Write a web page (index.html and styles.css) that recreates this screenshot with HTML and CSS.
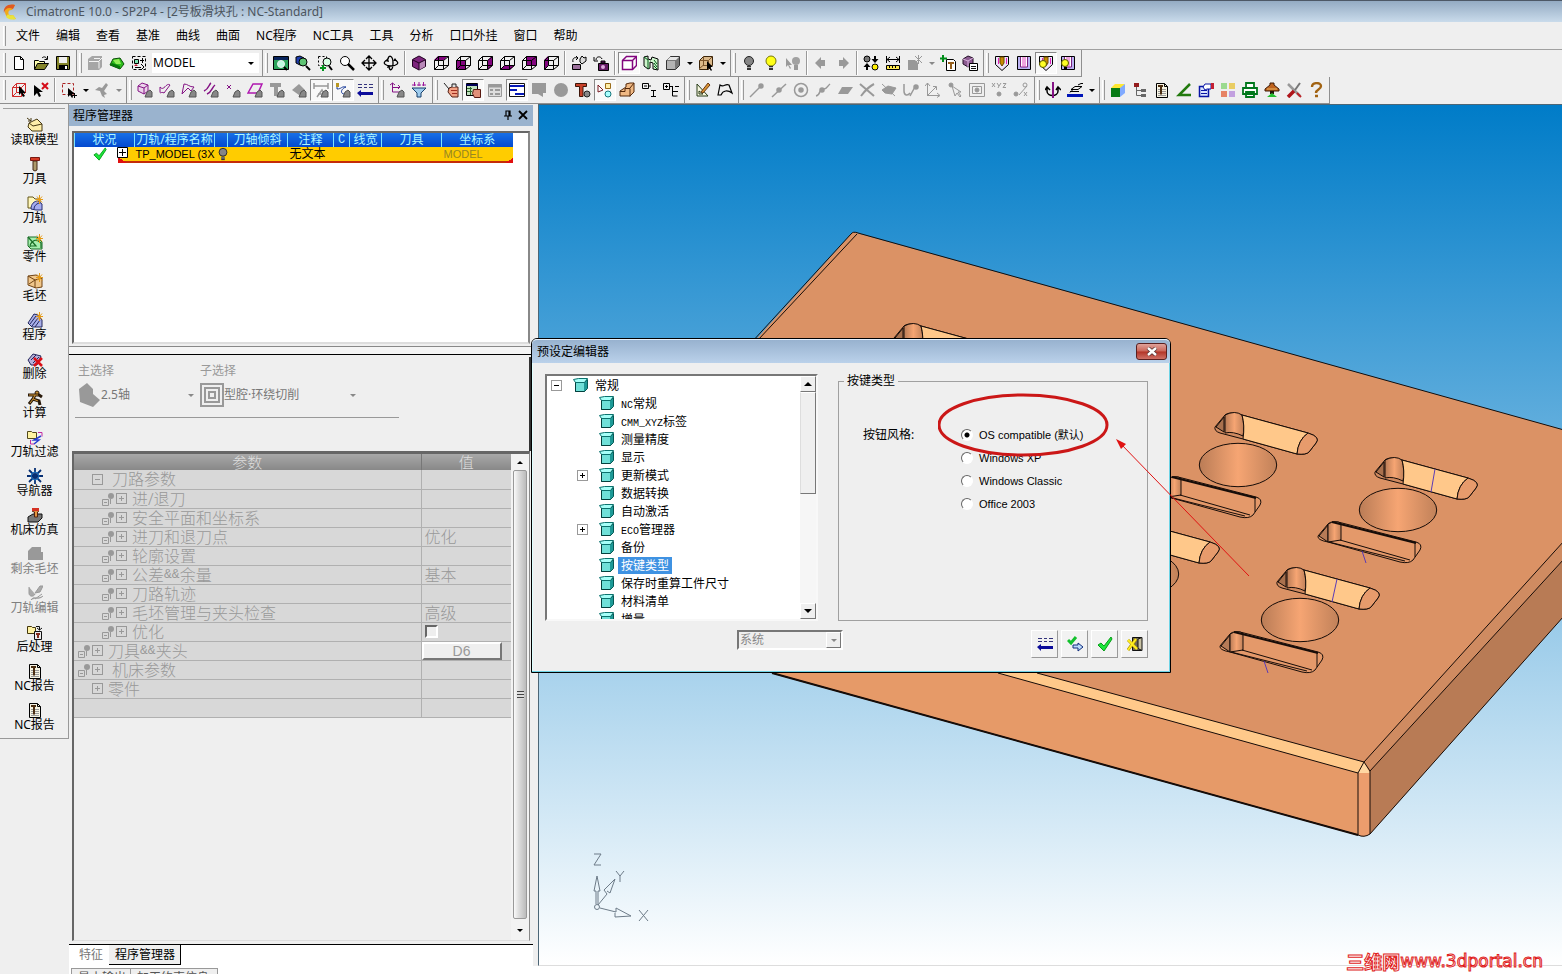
FILE: index.html
```html
<!DOCTYPE html>
<html lang="zh-CN">
<head>
<meta charset="utf-8">
<title>CimatronE 10.0</title>
<link rel="stylesheet" href="styles.css">
</head>
<body>
<svg class="defs" aria-hidden="true">
<defs>
<g id="new"><path d="M3.500 1.500h6l3 3v10h-9z" fill="#fff" stroke="#000"/><path d="M9.500 1.500v3h3" fill="none" stroke="#000"/></g>
<g id="open"><path d="M1.500 14V5.500h4l1 1h5v3" fill="#ffffb0" stroke="#000"/><path d="M1.500 14.500l3-6h11l-4 6z" fill="#84842a" stroke="#000"/><path d="M9 3c2-2 4-1 5 1M14.500 1v3.500h-3" fill="none" stroke="#000"/></g>
<g id="save"><path d="M1.500 1.500h13v13h-13z" fill="#84842a" stroke="#000"/><path d="M4 2h8v6H4z" fill="#eee"/><path d="M4 10h9v5H4z" fill="#000"/><path d="M10 11h2v3h-2z" fill="#fff"/></g>
<g id="greybox"><path d="M1 4l4-3h10v11l-3 3H1z" fill="#a6a6a6"/><path d="M2 6.500h10v7M12 6l3-3M7 3.500h6" fill="none" stroke="#f4f4f4"/></g>
<g id="green"><path d="M1 10L4 4l7-1 4 6-4 5z" fill="#2fbd1d" stroke="#0a4d08"/><path d="M4 5l6-1 2 5-5 0z" fill="#94ee59"/><path d="M1 10l10 4v-3l-8-3z" fill="#08780b"/></g>
<g id="frames"><path d="M1.500 1.500h13v13h-13z" fill="none" stroke="#000" stroke-dasharray="3 2"/><path d="M3.500 4.500h4v4h-4z" fill="#7de4b1" stroke="#000"/><path d="M9 5.500h4M11.500 3v5M4 12.500h6M10 9l3 3-3 3" fill="none" stroke="#000"/><path d="M3 11l2-2 2 2z" fill="#c51830"/></g>
<g id="zoomall"><path d="M.5 1.500h15v13H.5z" fill="#2ba45a" stroke="#000"/><path d="M1 2h14v3H1z" fill="#08245c"/><circle cx="8" cy="9" r="3.500" fill="#bdfde0" stroke="#eee"/><path d="M11 12l3 3" stroke="#000" stroke-width="2"/></g>
<g id="zoomsel"><path d="M1 2l4-1 4 2v5l-4 2-4-2z" fill="#1d3cad" stroke="#000"/><circle cx="8" cy="7" r="4" fill="#5fc474" stroke="#000"/><path d="M11 11l4 4" stroke="#000" stroke-width="2"/></g>
<g id="zoomwin"><path d="M1.500 1.500h8v9h-8z" fill="none" stroke="#000" stroke-dasharray="2 2"/><circle cx="10" cy="7" r="4" fill="#d7ffe5" stroke="#000"/><path d="M12 11l3 4" stroke="#000" stroke-width="2"/><path d="M3 13h6M6 10v6" stroke="#00931d" stroke-width="2"/></g>
<g id="zoom"><circle cx="6" cy="6" r="4.500" fill="#fff" stroke="#000"/><path d="M9 9l6 6" stroke="#000" stroke-width="2.500"/></g>
<g id="pan"><path d="M8 1v14M1 8h14M5 4l3-3 3 3M5 12l3 3 3-3M4 5L1 8l3 3M12 5l3 3-3 3" fill="none" stroke="#000" stroke-width="1.300"/></g>
<g id="rot"><path d="M4 5C-2 8 3 11 8 11s10-3 4-6M5 4c1-5 5-3 5 4s-3 9-4 4" fill="none" stroke="#000" stroke-width="1.300"/><path d="M5 3l1 4-4-1zM14 6l-4 0 2-3zM4 13l1-3 3 2z"/></g>
<g id="cube"><path d="M8 1l6.500 3.500v7L8 15l-6.500-3.500v-7z" fill="#7d257d" stroke="#200020"/><path d="M8 8l6-3v6.500L8 15z" fill="#b888b8"/><path d="M2 5l6 3 6-3M8 8v7" fill="none" stroke="#200020"/></g>
<path id="wire" d="M1.500 5.500h9v9h-9zM5.500 1.500h10v9h-10zM1.500 5.500l4-4M10.500 5.500l5-4M10.500 14.500l5-4M1.500 14.500l4-4" fill="none" stroke="#000"/>
<g id="w1"><path d="M1 5l4-4h10l-4 4z" fill="#82057e"/><use href="#wire"/></g>
<g id="w2"><path d="M1 5h10v10H1z" fill="#82057e"/><use href="#wire"/></g>
<g id="w3"><path d="M11 5l4-4v10l-4 4z" fill="#82057e"/><use href="#wire"/></g>
<g id="w4"><path d="M1 15l4-4h10l-4 4z" fill="#82057e"/><use href="#wire"/></g>
<g id="w5"><path d="M5 1h10v10H5z" fill="#82057e"/><use href="#wire"/></g>
<g id="w6"><path d="M1 5l4-4v10l-4 4z" fill="#82057e"/><use href="#wire"/></g>
<g id="viewrot"><path d="M1.500 9.500h8v5h-8z" fill="#9c709c" stroke="#000"/><path d="M2 7C1 3 4 2 6 3M5 1l2 2-2 2" fill="none" stroke="#000"/><path d="M9 4l2-3 2 2 2-1v4l-4 3-2-2z" fill="#ddd" stroke="#000"/></g>
<g id="camera"><path d="M5.500 8.500h10v7h-10zM8 6h4v2H8z" fill="#641a64" stroke="#000"/><circle cx="10" cy="12" r="2" fill="#dca9dc"/><path d="M9 4C8 1 3 1 3 5M1 2v4h4" fill="none" stroke="#000"/></g>
<g id="shade"><path d="M1.500 5.500l4-4h10v9l-4 4h-10z" fill="#fff" stroke="#82057e" stroke-width="1.500"/><path d="M1.500 5.500h10v9M11.500 5.500l4-4" fill="none" stroke="#82057e" stroke-width="1.500"/></g>
<g id="section"><path d="M1 2l4-1v3l3 1 1-3 6 2v11l-5-1V8L7 7v6l-2 1-4-3z" fill="#cef5cc" stroke="#000"/><path d="M1 2l4 3v9M11 5l3 4M11 8l3 4M11 11l3 3" fill="none" stroke="#005b15"/></g>
<g id="solid"><path d="M1.500 5.500l4-4h9v9l-4 4h-9z" fill="#777" stroke="#333"/><path d="M2 5l3-3h9l-3 3z" fill="#e6e6e6"/><path d="M2 6h8v8H2z" fill="#b4b4b4"/></g>
<g id="pickbox"><path d="M1.500 5.500l4-4h9v9l-4 4h-9z" fill="#dab889" stroke="#3a250c"/><path d="M1 5.500h9.500v9M10.500 5.500l4-4M5.500 1v9L1 14M5 10.500h10" fill="none" stroke="#795329"/><path d="M9 6v9l2-2 2 3 1-1-2-3h3z" fill="#000"/></g>
<g id="bulbg"><circle cx="8" cy="6" r="4.500" fill="#858585" stroke="#222"/><path d="M6 11h4v4H6z" fill="#333"/><path d="M6 12.500h4" stroke="#aaa"/></g>
<g id="bulby"><circle cx="8" cy="6" r="5" fill="#ffff18" stroke="#77770a"/><path d="M6 11h4v4H6z" fill="#333"/><path d="M6 12.500h4" stroke="#bbb"/></g>
<g id="bulbp"><circle cx="11" cy="6" r="4" fill="#a1a1a1"/><path d="M9 10h4v5H9zM1 3v9l2-2 2 4 1-1-2-3h3z" fill="#999"/></g>
<path id="left" d="M2 8l6-6v3h4v6H8v3z" fill="#999"/>
<path id="right" d="M14 8L8 2v3H4v6h4v3z" fill="#999"/>
<g id="swap"><circle cx="4" cy="4" r="3" fill="#777" stroke="#000"/><circle cx="12" cy="12" r="3" fill="#fff000" stroke="#000"/><path d="M12 1v5M4 15v-5" stroke="#000" stroke-width="2"/><path d="M8.500 4h7L12 8zM.5 12h7L4 8z"/></g>
<g id="dist"><path d="M1.500 1v7M14.500 1v7M2 4.500h12M5 2L2 4.500 5 7M11 2l3 2.500L11 7" fill="none" stroke="#000"/><path d="M1.500 10.500h13v4h-13z" fill="#ffea52" stroke="#000"/><path d="M4.500 11v2M7.500 11v2M10.500 11v2" stroke="#000"/></g>
<g id="greystar"><path d="M1 5h7l3 3v7H1z" fill="#999"/><path d="M8 1l7 7M15 1L8 8M11.500 0v9" stroke="#999"/></g>
<g id="toolplus"><path d="M6.500 4.500h7l2 2v9h-9z" fill="#fff" stroke="#000"/><path d="M8 7h6v2h-2v5h-2V9H8z" fill="#96601e"/><path d="M3 0v7M0 3.500h7" stroke="#008d19" stroke-width="2"/></g>
<g id="cubelist"><path d="M1 4l5-3 5 2v6l-5 3-5-3z" fill="#8c5c91" stroke="#241027"/><path d="M1 4l5 2 5-3M6 6v6" stroke="#dab1df" fill="none"/><path d="M7.500 8.500h8v7h-8z" fill="#fff" stroke="#000"/><path d="M9 11.500h5M9 13.500h5" stroke="#111"/></g>
<g id="pencil"><path d="M1.500 1.500h13v8l-6.500 6-6.500-6z" fill="#eee4fa" stroke="#000"/><path d="M6 2h4v6l-2 3-2-3z" fill="#c88b00" stroke="#6b4a00"/><path d="M4.500 3v6M12.500 3v6" stroke="#e021c0"/></g>
<g id="slots"><path d="M1.500 1.500h13v13h-13z" fill="#bbb2f2" stroke="#000"/><path d="M4.500 2v10h7V2" fill="#fff" stroke="#7b2180"/><path d="M7 2v10M9 2v10" stroke="#e04ac0"/></g>
<g id="pencilb"><use href="#pencil"/><circle cx="5" cy="9" r="3.500" fill="#ffff25" stroke="#555500"/></g>
<g id="slotsb"><use href="#slots"/><circle cx="5" cy="8" r="3.500" fill="#ffff25" stroke="#555500"/><path d="M4 12h3v3H4z"/></g>
<g id="redcube"><path d="M1.500 5.500h9v9h-9zM5.500 1.500h9v9h-9zM1.500 5.500l4-4M10.500 5.500l4-4M10.500 14.500l4-4M1.500 14.500l4-4" fill="none" stroke="#d02a2a"/><path d="M8 4v9l2-2 2 4 2-1-2-3h3z"/></g>
<g id="ptrx"><path d="M1 3v11l3-3 2 4 2-1-2-4h4z"/><path d="M9 1l6 6M15 1L9 7" stroke="#d40b17" stroke-width="2"/></g>
<g id="selbox"><path d="M1.500 1.500h11v11h-11z" fill="none" stroke="#a22" stroke-dasharray="3 2"/><path d="M7 6v9l2-2 2 3 1-1-1-3h3z"/><path d="M11 13.500h5M13.500 11v5" stroke="#000"/></g>
<path id="greybird" d="M1 8l4-3 3 1 4-5 2 2-4 6 3 3-3 1 1 3-3-2-2-5z" fill="#999"/>
<path id="mono" d="M8 15l2-5 3-2 2 2v5z" fill="#888" stroke="#555"/>
<g id="f1"><path d="M1 4l4-3 6 2v6l-4 3-6-3zM1 4l6 2v6M7 6l4-3" fill="#ead4ea" stroke="#851385"/><use href="#mono"/></g>
<g id="f2"><path d="M1 5C5 10 7 0 11 3L5 11C2 9 1 13 1 9z" fill="none" stroke="#851385"/><use href="#mono"/></g>
<g id="f3"><path d="M1 12L3 2c4 0 5 3 10 3L10 9 7 6z" fill="none" stroke="#851385"/><use href="#mono"/></g>
<g id="f4"><path d="M1 9C6 7 6 2 8 1M4 12C9 10 9 5 12 3" fill="none" stroke="#851385" stroke-width="1.500"/><use href="#mono"/></g>
<g id="f5"><path d="M2 3l4 4M6 3L2 7" stroke="#851385"/><use href="#mono"/></g>
<g id="f6"><path d="M1 11l5-9h9l-4 9z" fill="none" stroke="#b018b0" stroke-width="1.500"/><use href="#mono"/></g>
<g id="f7"><path d="M1 1h11v4H9v9H5V5H1z" fill="#999"/><use href="#mono"/></g>
<g id="f8"><path d="M1 8l7-6 6 6-6 5z" fill="#999"/><use href="#mono"/></g>
<g id="f9"><path d="M1 1v6M15 1v6M1 4h14M4 15l5-7 4 7M5 12h7" fill="none" stroke="#999" stroke-width="1.500"/><use href="#mono"/></g>
<g id="f10"><path d="M2 1v6c5 0 4-3 9-2-6 2-6 8 0 7" fill="none" stroke="#173a99"/><path d="M1 1h3v4H1z" fill="#b89622"/><use href="#mono"/></g>
<g id="list"><path d="M1 2.500h4M7 2.500h3M12 2.500h4M1 5.500h4M7 5.500h3M12 5.500h4" stroke="#33337c"/><path d="M0 11l4-3v2h12v3H4v2z" fill="#0b0b9a"/></g>
<g id="tree"><path d="M3.500 1v9h9M3 5.500h7M1 3l2.500-2L6 3M9 3l2 2-2 2" fill="none" stroke="#851385"/><use href="#mono"/></g>
<g id="funnel"><path d="M1 6h14l-5 5v4H6v-4z" fill="#9eccef" stroke="#163f6b"/><path d="M3.500 0v4M8 0v4M12.500 0v4M1 3h4M6 3h4M11 3h4" stroke="#9b169b"/></g>
<g id="hand1"><path d="M6 6l3-1h6v10H9L5 10z" fill="#f2a184" stroke="#552015"/><path d="M9 5V2h4v3M1 1l5 6" fill="#ddd" stroke="#222"/><path d="M8 8.500h6M9 11.500h5" stroke="#a12d21"/></g>
<g id="hand2"><path d="M1.500 1.500h11v12h-11z" fill="#bfe0bd" stroke="#000"/><path d="M1 3h12" stroke="#005" stroke-width="2"/><path d="M2 6.500h5M2 9.500h5M5.500 5v8" stroke="#2b672c"/><path d="M8.500 7.500h7v8h-6l-2-4z" fill="#e09079" stroke="#581910"/></g>
<g id="form"><path d="M1.500 2.500h13v12h-13z" fill="#ddd" stroke="#999"/><path d="M1 4h14" stroke="#999" stroke-width="3"/><path d="M3 8h3M3 12h3M8 8h5M8 12h5" stroke="#999" stroke-width="2"/></g>
<g id="rows"><path d="M.5 1.500h15v13H.5z" fill="#fff" stroke="#111"/><path d="M1 4h14M1 8h7M6 12h9" stroke="#0618b8" stroke-width="2"/></g>
<path id="bubble" d="M1 1h14v10h-3v4l-5-3H1z" fill="#999"/>
<circle id="disc" cx="8" cy="8" r="7" fill="#999"/>
<g id="hammer"><path d="M.5 1.500h11v3H8v10H4.500v-10h-4z" fill="#c74129" stroke="#3d1509"/><circle cx="12" cy="12" r="3" fill="#888" stroke="#222"/></g>
<g id="shapes"><path d="M1 3v7l5-2z" fill="#fff" stroke="#791c24"/><path d="M8.500 1.500h5v5h-5z" fill="#ffefaa" stroke="#9b6d1b"/><circle cx="11" cy="12" r="3" fill="#aff" stroke="#17777d"/></g>
<g id="step"><path d="M1 9l6-4V2l4-1h4v9l-4 4H1z" fill="#f0b984" stroke="#54290b"/><path d="M1 9.500h5v-3h5v8M11 6l4-5" fill="none" stroke="#54290b"/></g>
<g id="nodea"><path d="M1.500 1.500h6v5h-6zM3 4h3M8 4h2M10 8.500h5M12.500 8v6M10 14.500h5" fill="none" stroke="#000"/></g>
<g id="nodeb"><path d="M.5 1.500h6v6h-6zM2 4.500h3M3.500 3v3M7 4.500h3M9.500 4v10h5M10 9.500h5M12 4.500h4" fill="none" stroke="#000"/></g>
<g id="sketch"><path d="M2 2v12h11zM4 9v3h4z" fill="#f8f8e0" stroke="#263b17"/><path d="M6 10l7-9 2 2-7 8z" fill="#d79335" stroke="#6c3912"/></g>
<path id="surf" d="M1 13L3 3c4 3 5-2 9 0l3 8c-4-3-9-3-11 2z" fill="none" stroke="#000" stroke-width="1.200"/>
<g id="g1" fill="none" stroke="#999" stroke-width="1.500"><path d="M1 15L13 3"/><circle cx="12" cy="4" r="2" fill="#999"/></g>
<g id="g2" fill="none" stroke="#999" stroke-width="1.500"><path d="M1 15L15 2"/><circle cx="8" cy="8" r="2" fill="#999"/></g>
<g id="g3" fill="none" stroke="#999" stroke-width="1.500"><circle cx="8" cy="8" r="6.500"/><circle cx="8" cy="8" r="2" fill="#999"/></g>
<g id="g4" fill="none" stroke="#999" stroke-width="1.500"><path d="M1 14c5-1 3-8 7-7s4-3 7-5"/><circle cx="7" cy="8" r="2" fill="#999"/></g>
<path id="g5" d="M1 12l4-7h11l-5 7z" fill="#999"/>
<path id="g6" d="M1 2l14 12M15 2C9 5 5 10 2 14" stroke="#999" stroke-width="2" fill="none"/>
<g id="g7" fill="#999" stroke="#999"><path d="M1 8l6-4 8 2-4 6-7-1z"/><path d="M1 2l13 12"/></g>
<g id="g8" fill="none" stroke="#999" stroke-width="1.500"><path d="M1 2v7c0 5 4 5 6 2M13 3L7 14"/><circle cx="13" cy="5" r="2" fill="#999"/></g>
<path id="g9" d="M2.500 1v12.500h12M2 14l9-9M8 4.500h3.500V8M0 4l2.500-3L5 4M12 11l3 2.500-3 2" stroke="#999" fill="none"/>
<g id="g10" fill="none" stroke="#999"><circle cx="4" cy="3" r="2" fill="#999"/><path d="M5 4l3 10 2-3 3 4 1-1-3-4h3z"/></g>
<g id="g11" fill="none" stroke="#999"><path d="M.5 1.500h15v13H.5zM3.500 4.500h9v7h-9z"/><circle cx="8" cy="8" r="2" fill="#999"/></g>
<g id="g12" fill="none" stroke="#999"><path d="M1 1l3 4M4 1L1 5M6 1l2 3 2-3M8 4L7 6M12 1.500h3l-3 4h3"/><circle cx="8" cy="12" r="2" fill="#999"/></g>
<g id="g13" fill="none" stroke="#999"><path d="M6 13l8-9M11 10l3 4M14 10l-3 4"/><circle cx="3" cy="12" r="2" fill="#999"/><circle cx="12" cy="3" r="2"/></g>
<g id="ucs"><path d="M2 6v3c0 6 11 6 11 0V6M0 8l2-3 3 3M11 8l2-3 3 3" fill="none" stroke="#000" stroke-width="1.500"/><path d="M8 0v16" stroke="#851385" stroke-width="2"/></g>
<g id="planes"><path d="M4 7.500l4-3h7l-4 3zM3 10.500l3-3M11 3l3-1.500h2" fill="none" stroke="#000"/><path d="M3 9.500h9" stroke="#000"/><path d="M0 12h16v3H0z" fill="#0014b8"/></g>
<g id="cubergb"><path d="M1 6h9v9H1z" fill="#077b16"/><path d="M1 6l4-4h10l-4 4z" fill="#ffe831"/><path d="M10 6l5-4v9l-5 4z" fill="#80aaff"/></g>
<g id="redtree"><path d="M2 1h5v4H2z" fill="#941c1d"/><path d="M4.500 5v8.500h5M4 8.500h5" fill="none" stroke="#666"/><path d="M9 7h5v3H9zM9 12h5v3H9z" fill="#666"/></g>
<g id="doc"><path d="M2.500 1.500h8l3 3v11h-11z" fill="#f6f3e2" stroke="#000"/><path d="M10.500 1.500v3h3" fill="none" stroke="#000"/><path d="M4 7.500h8M4 9.500h8M4 11.500h8M4 13.500h8" stroke="#999"/><path d="M4 3h5v2H8v7l-1 1-1-1V5H4z" fill="#4a2c10"/></g>
<path id="angle" d="M14 2L3 13h12" stroke="#227a0e" stroke-width="2.500" fill="none"/>
<g id="prop"><path d="M1.500 4.500h9v10h-9z" fill="#d8e2fe" stroke="#0713a5" stroke-width="1.500"/><path d="M3 8.500h6M3 11.500h6" stroke="#0713a5"/><path d="M5 5l2-3h6v5h-4l-2 1z" fill="#fff" stroke="#0713a5"/><path d="M13 1h3v6h-3z" fill="#c42033"/></g>
<g id="tiles"><path d="M1 1h6v6H1z" fill="#9bda8f"/><path d="M9 1h6v6H9z" fill="#e9cd63"/><path d="M1 9h6v6H1z" fill="#e68365"/><path d="M9 9h6v6H9z" fill="#c2a0df"/></g>
<g id="print"><path d="M4 1h8v5H4zM1 6h14v6H1zM4 10h8v5H4z" fill="#fff" stroke="#00781b" stroke-width="1.800"/></g>
<g id="lamp"><path d="M6 1h4v2l5 4v2H1V7l5-4z" fill="#be621d" stroke="#3f1c08"/><path d="M3 7h10" stroke="#eab663"/><path d="M6 9h4v3H6z" fill="#241309"/><path d="M8 11l5 4H3z" fill="#25be31"/></g>
<g id="tools"><path d="M2 2l12 12" stroke="#999" stroke-width="2.500"/><path d="M14 1L9 8" stroke="#777" stroke-width="2"/><path d="M8 9l-6 6" stroke="#af151b" stroke-width="3.500"/><path d="M11 11l4 4" stroke="#bc2227" stroke-width="2"/></g>
<path id="help" d="M4 5c0-5 9-5 9-1 0 4-5 3-5 7M7 14h3" stroke="#a26312" stroke-width="2.400" fill="none"/>
<g id="star"><path d="M12.500 0v9M9 4.500h7M10 1.500l5 6M15 1.500l-5 6" stroke="#e69b15"/></g>
<g id="s1"><path d="M2 6l8-4 5 5v7H5l-4-4z" fill="#ffefaa" stroke="#463813"/><path d="M2 6l4 3 9-2M0 1l4 3M4 1v3H1" fill="none" stroke="#463813"/></g>
<g id="s2"><path d="M6 5h4v9l-2 1-2-1z" fill="#ad9a6b" stroke="#442916"/><path d="M3.500 1.500h9v3h-9z" fill="#d53b26" stroke="#7a1a12"/></g>
<g id="s3"><path d="M1 2h5l2 2h5v9H1z" fill="#fff7ba" stroke="#645719"/><path d="M4 14c0-5 3-8 7-8l4 3v6H9z" fill="#a5acef" stroke="#262e74"/><path d="M7 14c0-3 2-5 5-6" fill="none" stroke="#262e74"/><use href="#star"/></g>
<g id="s4"><path d="M1 3h9l5 5v7H4l-3-3z" fill="#a5efad" stroke="#196d26"/><path d="M3 13c0-4 3-7 7-7l4 3v5M1 3l8 9h-6" fill="none" stroke="#196d26" stroke-width="1.200"/><use href="#star"/></g>
<g id="s5"><path d="M1 3l8-1 6 3v9l-6 1-8-3z" fill="#f1c78b" stroke="#704313"/><path d="M1 3l7 4 7-2M8 7v8M2 11l6-4" fill="none" stroke="#704313"/><use href="#star"/></g>
<g id="s6"><path d="M1 11l6-9 4 1 4 5v7H5z" fill="#a9afea" stroke="#23275c"/><path d="M3 12l6-8M5 14l6-8M8 15l5-7" stroke="#23275c"/><use href="#star"/></g>
<g id="s7"><path d="M1 9l5-6 8 2-4 9H4z" fill="#b7b0da" stroke="#23275c"/><path d="M4 9l5-5M6 12l6-6" stroke="#23275c"/><path d="M7 7l8 8M15 7l-8 8" stroke="#d90f18" stroke-width="2.500"/></g>
<g id="s8"><circle cx="10" cy="3" r="2" fill="#cd9233" stroke="#28190a"/><path d="M1 5h11l3 2M8 5L6 9l6 2 1 4M6 9l-4 5" fill="none" stroke="#28190a" stroke-width="3"/><path d="M2 5h9M8 5L6 9l5 2M6 9l-3 4" fill="none" stroke="#d29735"/></g>
<g id="s9"><path d="M.5 2.500h4l1 1h4v6h-9z" fill="#fff4a2" stroke="#534a1b"/><path d="M11 3.500h4v4M3.500 11v4h4" fill="none" stroke="#c22ba2"/><path d="M14 7L7 11h5l-5 4" fill="none" stroke="#263dd2" stroke-width="1.500"/></g>
<g id="s10"><path d="M8 0v16M0 8h16M2 2l12 12M14 2L2 14" stroke="#072f73" stroke-width="1.800"/><circle cx="8" cy="8" r="4" fill="none" stroke="#2179c7"/></g>
<g id="s11"><path d="M1 10l5-3h9v4l-4 4H1z" fill="#777" stroke="#111"/><path d="M5.500 1.500h6v3l-1 .5v5h-3V5l-2-.5z" fill="#e29540" stroke="#522211"/><path d="M5 1h7v3H5z" fill="#d53223"/></g>
<path id="s12" d="M1 5l4-4h9v5h2v8H1z" fill="#999"/>
<path id="s13" d="M2 2v6c0 4 5 4 6 1M4 15c3-5 7 1 12-4M8 8l5-7h3l-3 6zM8 14l7-5" fill="#aaa" stroke="#999"/>
<g id="s14"><path d="M.5 2.500h4l1 1h3v6h-8z" fill="#fff2a3" stroke="#44380b"/><path d="M7.500 7.500h7v8h-7z" fill="#eee" stroke="#111"/><path d="M9 2.500h3.500V6M10 4l2.500 2L15 4" fill="none" stroke="#111"/><path d="M9 9h4v2h-1v3h-2v-3H9z" fill="#852e1f"/></g>
<g id="folder"><path d="M2.500 5.500h9l3-3v9l-3 3h-9z" fill="#1d9a97" stroke="#075955"/><path d="M3 6h8v8H3z" fill="#6fe0d8"/><path d="M2.500 5.500L.5 2.500l5-1h9l-3 4z" fill="#a6fff8" stroke="#0b716d"/><path d="M2.500 5.500v9h9" fill="none" stroke="#04403d"/></g>
<g id="pin"><circle cx="10" cy="4" r="3" fill="#999"/><path d="M9.500 7v5M1.500 7.500h6v6h-6zM3 10.500h3" fill="none" stroke="#999"/></g>
<g id="tick"><path d="M1 9l3-2 3 3 7-9 1 2-8 12z" fill="#1be63b" stroke="#079c17"/></g>
<g id="tickgo"><path d="M1 4l3 3 5-6" fill="none" stroke="#13c12d" stroke-width="3"/><path d="M6 9v3h5v3l5-4-5-4v2z" fill="#bcdafa" stroke="#102c7c"/></g>
<g id="exit"><path d="M5.500 1.500h9v13h-9z" fill="#6e6958" stroke="#111"/><path d="M11 3l4-1.500v13l-4-2z" fill="#c9c2a4" stroke="#111"/><path d="M1 4l9 9M9 3l-8 11" stroke="#b59700" stroke-width="3"/><path d="M1 4l9 9M9 3l-8 11" stroke="#ffef20" stroke-width="1.800"/></g>

<linearGradient id="bore"><stop offset="0" stop-color="#ba7c56"/><stop offset=".5" stop-color="#f6a573"/><stop offset="1" stop-color="#c18159"/></linearGradient>
<g id="slotA" stroke="#160c08" stroke-width="1">
<path d="M0 0L10-12Q14-16 27-12L93 6Q106 10 101 16L94 25Q91 28 82 27L28 12 5 6Q-1 4 0 0z" fill="#d08a60"/>
<path d="M1 0L9-10V5z" fill="#a9714e"/>
<path d="M10-12Q20-17 27-12 30 0 28 9 18 4 10 6z" fill="url(#bore)"/>
<path d="M27-12L93 6Q83 13 82 27L28 12Q30-2 27-12z" fill="#ffc88a"/>
<path d="M93 6Q106 10 101 16L94 25Q91 28 82 27 83 13 93 6z" fill="#e79b6c"/>
</g>
<g id="slotB" stroke="#160c08" stroke-width="1">
<path d="M0 0L10-12Q14-16 24-13L98 6Q105 8 102 14L95 24Q91 28 82 26L10 6Q-1 4 0 0z" fill="#e4996a"/>
<path d="M1 0L10-11V6z" fill="#b77b57"/><path d="M10-12Q17-16 23-13V4L10 6z" fill="url(#bore)"/>
<path d="M14-14L98 7" fill="none" stroke-width="2"/><path d="M22 4L92 24M11 6l76 19M97 7v14" fill="none"/>
</g>
<g id="holes"><use href="#slotA"/><ellipse cx="23" cy="38" rx="38.700" ry="21.700" fill="url(#bore)" stroke="#160c08"/><use href="#slotB" x="-57" y="64"/></g>
</defs>
</svg>

<header class="titlebar">
<svg width="16" height="16" viewBox="0 0 16 16"><path d="M13 1C0-2-1 17 14 15l-3-4c-6 2-6-6-1-5z" fill="#f0a91c"/><path d="M13 1C5-1 1 4 2 9 3 4 7 3 11 5z" fill="#e05a21"/><path d="M4 13c3 3 7 3 10 2l-3-4c-3 1-4 0-5-1z" fill="#e8e33c"/></svg>
<h1>CimatronE 10.0 - SP2P4 - [2号板滑块孔 : NC-Standard]</h1>
</header>
<nav class="menu"><i class="grip"></i><button>文件</button><button>编辑</button><button>查看</button><button>基准</button><button>曲线</button><button>曲面</button><button>NC程序</button><button>NC工具</button><button>工具</button><button>分析</button><button>口口外挂</button><button>窗口</button><button>帮助</button></nav>

<div class="bar">
<div class="grp first"><i class="grip"></i><button aria-label="新建"><svg><use href="#new"/></svg></button><button aria-label="打开"><svg><use href="#open"/></svg></button><button aria-label="保存"><svg><use href="#save"/></svg></button></div>
<div class="grp"><i class="grip"></i><button aria-label="零件"><svg><use href="#greybox"/></svg></button><button aria-label="毛坯"><svg><use href="#green"/></svg></button><button aria-label="坐标"><svg><use href="#frames"/></svg></button><span class="combo"><select aria-label="坐标系"><option>MODEL</option></select><i class="tri"></i></span></div>
<div class="grp"><i class="grip"></i><button aria-label="全部显示"><svg><use href="#zoomall"/></svg></button><button aria-label="显示所选"><svg><use href="#zoomsel"/></svg></button><button aria-label="窗口放大"><svg><use href="#zoomwin"/></svg></button><button aria-label="缩放"><svg><use href="#zoom"/></svg></button><button aria-label="平移"><svg><use href="#pan"/></svg></button><button aria-label="旋转"><svg><use href="#rot"/></svg></button><i class="sep"></i><button aria-label="等轴测"><svg><use href="#cube"/></svg></button><button aria-label="俯视"><svg><use href="#w1"/></svg></button><button aria-label="前视"><svg><use href="#w2"/></svg></button><button aria-label="右视"><svg><use href="#w3"/></svg></button><button aria-label="仰视"><svg><use href="#w4"/></svg></button><button aria-label="后视"><svg><use href="#w5"/></svg></button><button aria-label="左视"><svg><use href="#w6"/></svg></button><i class="sep"></i><button aria-label="翻转视图"><svg><use href="#viewrot"/></svg></button><button aria-label="视图快照"><svg><use href="#camera"/></svg></button><i class="sep"></i><button class="on" aria-label="线框"><svg><use href="#shade"/></svg></button><button aria-label="剖面"><svg><use href="#section"/></svg></button><button aria-label="着色"><svg><use href="#solid"/></svg></button><i class="dd"></i><button aria-label="拾取实体"><svg><use href="#pickbox"/></svg></button><i class="dd"></i></div>
<div class="grp"><i class="grip"></i><button aria-label="隐藏"><svg><use href="#bulbg"/></svg></button><button aria-label="显示"><svg><use href="#bulby"/></svg></button><button aria-label="选择显示"><svg><use href="#bulbp"/></svg></button><i class="sep"></i><button aria-label="后退"><svg><use href="#left"/></svg></button><button aria-label="前进"><svg><use href="#right"/></svg></button><i class="sep"></i><button aria-label="切换显示"><svg><use href="#swap"/></svg></button><button aria-label="测量"><svg><use href="#dist"/></svg></button><button aria-label="爆炸"><svg><use href="#greystar"/></svg></button><i class="dd dim"></i><button aria-label="添加刀具"><svg><use href="#toolplus"/></svg></button><button aria-label="实体列表"><svg><use href="#cubelist"/></svg></button></div>
<div class="grp"><i class="grip"></i><button aria-label="刀具视图"><svg><use href="#pencil"/></svg></button><button aria-label="路径视图"><svg><use href="#slots"/></svg></button><button class="on" aria-label="显示刀具"><svg><use href="#pencilb"/></svg></button><button aria-label="显示路径"><svg><use href="#slotsb"/></svg></button></div>
</div>
<div class="bar">
<div class="grp first"><i class="grip"></i><button aria-label="选择实体"><svg><use href="#redcube"/></svg></button><button aria-label="取消选择"><svg><use href="#ptrx"/></svg></button><i class="sep"></i><button aria-label="框选"><svg><use href="#selbox"/></svg></button><i class="dd"></i><button aria-label="过滤"><svg><use href="#greybird"/></svg></button><i class="dd dim"></i></div>
<div class="grp"><i class="grip"></i><button aria-label="过滤体"><svg><use href="#f1"/></svg></button><button aria-label="过滤面"><svg><use href="#f2"/></svg></button><button aria-label="过滤边"><svg><use href="#f3"/></svg></button><button aria-label="过滤曲线"><svg><use href="#f4"/></svg></button><button aria-label="过滤点"><svg><use href="#f5"/></svg></button><button aria-label="过滤平面"><svg><use href="#f6"/></svg></button><button aria-label="过滤刀具"><svg><use href="#f7"/></svg></button><button aria-label="过滤毛坯"><svg><use href="#f8"/></svg></button><button class="on" aria-label="过滤尺寸"><svg><use href="#f9"/></svg></button><button class="on" aria-label="过滤轨迹"><svg><use href="#f10"/></svg></button><button aria-label="重置过滤"><svg><use href="#list"/></svg></button></div>
<div class="grp"><i class="grip"></i><button aria-label="过滤坐标"><svg><use href="#tree"/></svg></button><button aria-label="漏斗"><svg><use href="#funnel"/></svg></button></div>
<div class="grp"><i class="grip"></i><button aria-label="向导"><svg><use href="#hand1"/></svg></button><button class="on" aria-label="表格"><svg><use href="#hand2"/></svg></button><button aria-label="表单"><svg><use href="#form"/></svg></button><button class="on" aria-label="行视图"><svg><use href="#rows"/></svg></button><button aria-label="注释"><svg><use href="#bubble"/></svg></button><button aria-label="圆盘"><svg><use href="#disc"/></svg></button><button aria-label="刀具库"><svg><use href="#hammer"/></svg></button><button class="on" aria-label="几何"><svg><use href="#shapes"/></svg></button><button aria-label="台阶"><svg><use href="#step"/></svg></button><button aria-label="折叠"><svg><use href="#nodea"/></svg></button><button aria-label="展开"><svg><use href="#nodeb"/></svg></button></div>
<div class="grp"><i class="grip"></i><button aria-label="草图"><svg><use href="#sketch"/></svg></button><button aria-label="曲面"><svg><use href="#surf"/></svg></button></div>
<div class="grp"><i class="grip"></i><button aria-label="端点"><svg><use href="#g1"/></svg></button><button aria-label="中点"><svg><use href="#g2"/></svg></button><button aria-label="圆心"><svg><use href="#g3"/></svg></button><button aria-label="曲线点"><svg><use href="#g4"/></svg></button><button aria-label="面点"><svg><use href="#g5"/></svg></button><button aria-label="交点"><svg><use href="#g6"/></svg></button><button aria-label="穿透点"><svg><use href="#g7"/></svg></button><button aria-label="投影点"><svg><use href="#g8"/></svg></button><button aria-label="原点"><svg><use href="#g9"/></svg></button><button aria-label="拾取点"><svg><use href="#g10"/></svg></button><button aria-label="屏幕点"><svg><use href="#g11"/></svg></button><button aria-label="坐标点"><svg><use href="#g12"/></svg></button><button aria-label="增量点"><svg><use href="#g13"/></svg></button></div>
<div class="grp"><i class="grip"></i><button aria-label="坐标系"><svg><use href="#ucs"/></svg></button><button aria-label="工作面"><svg><use href="#planes"/></svg></button><i class="dd"></i></div>
<div class="grp"><i class="grip"></i><button aria-label="颜色"><svg><use href="#cubergb"/></svg></button><button aria-label="结构树"><svg><use href="#redtree"/></svg></button><button aria-label="报告"><svg><use href="#doc"/></svg></button><button aria-label="角度"><svg><use href="#angle"/></svg></button><button aria-label="属性"><svg><use href="#prop"/></svg></button><button aria-label="平铺"><svg><use href="#tiles"/></svg></button><button aria-label="打印"><svg><use href="#print"/></svg></button><button aria-label="光源"><svg><use href="#lamp"/></svg></button><button aria-label="预设定"><svg><use href="#tools"/></svg></button><button aria-label="帮助"><svg><use href="#help"/></svg></button></div>
</div>

<main class="desk">
<aside class="side">
<button><svg><use href="#s1"/></svg>读取模型</button>
<button><svg><use href="#s2"/></svg>刀具</button>
<button><svg><use href="#s3"/></svg>刀轨</button>
<button><svg><use href="#s4"/></svg>零件</button>
<button><svg><use href="#s5"/></svg>毛坯</button>
<button><svg><use href="#s6"/></svg>程序</button>
<button><svg><use href="#s7"/></svg>删除</button>
<button><svg><use href="#s8"/></svg>计算</button>
<button><svg><use href="#s9"/></svg>刀轨过滤</button>
<button><svg><use href="#s10"/></svg>导航器</button>
<button><svg><use href="#s11"/></svg>机床仿真</button>
<button disabled><svg><use href="#s12"/></svg>剩余毛坯</button>
<button disabled><svg><use href="#s13"/></svg>刀轨编辑</button>
<button><svg><use href="#s14"/></svg>后处理</button>
<button><svg><use href="#doc"/></svg>NC报告</button>
<button><svg><use href="#doc"/></svg>NC报告</button>
</aside>

<section class="panel">
<div class="ptitle"><h2>程序管理器</h2><button aria-label="固定"><svg width="10" height="10" viewBox="0 0 10 10"><path d="M3 6V1h4v5M1 6h8M5 6v4M6 1v5" fill="none" stroke="#000" stroke-width="1.200"/></svg></button><button aria-label="关闭"><svg width="10" height="10" viewBox="0 0 10 10"><path d="M1 1l8 8M9 1L1 9" stroke="#000" stroke-width="1.800"/></svg></button></div>
<div class="list">
<table class="prog">
<colgroup><col class="c60"><col class="c80"><col class="c13"><col class="c60"><col class="c46"><col class="c16"><col class="c32"><col class="c60"><col class="c71"></colgroup>
<thead><tr><th>状况</th><th>刀轨/程序名称</th><th></th><th>刀轴倾斜</th><th>注释</th><th class="cc">C</th><th>线宽</th><th>刀具</th><th>坐标系</th></tr></thead>
<tbody><tr><td class="st"><svg class="ok" width="14" height="14" viewBox="0 0 16 16"><use href="#tick"/></svg><svg class="ex" width="11" height="11" viewBox="0 0 11 11"><path d="M.5.5h10v10H.5z" fill="#fff" stroke="#000"/><path d="M2 5.500h7M5.500 2v7" stroke="#000"/></svg></td><td class="name">TP_MODEL (3X</td><td><svg class="blb" width="14" height="14" viewBox="0 0 16 16"><use href="#bulbg"/></svg></td><td></td><td class="cjk">无文本</td><td></td><td></td><td></td><td class="mdl">MODEL</td></tr></tbody>
</table>
</div>
<div class="split"></div>
<div class="pick">
<div class="pf"><span>主选择</span><button disabled><svg width="23" height="24" viewBox="0 0 23 24"><path d="M1 6L9 0l6 6v5l7 6-7 7L2 19z" fill="#999"/></svg>2.5轴<i class="tri dim"></i></button></div>
<div class="pf wide"><span>子选择</span><button disabled><svg width="24" height="24" viewBox="0 0 24 24"><path d="M1 1h22v22H1zM5 5h14v14H5zM9 9h6v6H9z" fill="none" stroke="#999" stroke-width="2"/></svg>型腔·环绕切削<i class="tri dim"></i></button></div>
</div>
<div class="params">
<div class="ptable">
<table class="tab">
<thead><tr><th>参数</th><th class="val">值</th></tr></thead>
<tbody>
<tr><td><div class="r l0 wide"><i class="bx mi"></i>刀路参数</div></td><td></td></tr>
<tr><td><div class="r l1"><svg><use href="#pin"/></svg><i class="bx"></i>进/退刀</div></td><td></td></tr>
<tr><td><div class="r l1"><svg><use href="#pin"/></svg><i class="bx"></i>安全平面和坐标系</div></td><td></td></tr>
<tr><td><div class="r l1"><svg><use href="#pin"/></svg><i class="bx"></i>进刀和退刀点</div></td><td>优化</td></tr>
<tr><td><div class="r l1"><svg><use href="#pin"/></svg><i class="bx"></i>轮廓设置</div></td><td></td></tr>
<tr><td><div class="r l1"><svg><use href="#pin"/></svg><i class="bx"></i>公差<small>&amp;&amp;</small>余量</div></td><td>基本</td></tr>
<tr><td><div class="r l1"><svg><use href="#pin"/></svg><i class="bx"></i>刀路轨迹</div></td><td></td></tr>
<tr><td><div class="r l1"><svg><use href="#pin"/></svg><i class="bx"></i>毛坯管理与夹头检查</div></td><td>高级</td></tr>
<tr><td><div class="r l1"><svg><use href="#pin"/></svg><i class="bx"></i>优化</div></td><td><input type="checkbox" aria-label="优化"></td></tr>
<tr><td><div class="r"><svg><use href="#pin"/></svg><i class="bx"></i>刀具<small>&amp;&amp;</small>夹头</div></td><td class="nb"><button class="d6" disabled>D6</button></td></tr>
<tr><td><div class="r wide"><svg><use href="#pin"/></svg><i class="bx"></i>机床参数</div></td><td></td></tr>
<tr><td><div class="r l0"><i class="bx"></i>零件</div></td><td></td></tr>
<tr><td></td><td></td></tr>
</tbody>
</table>
</div>
<div class="vs"><i class="tri up"></i><div class="thumb"><i></i></div><i class="tri"></i></div>
</div>
<div class="tabs"><button class="off">特征</button><button class="act">程序管理器</button></div>
<div class="foot"><span>最小输出</span><span class="f2">加工约束信息</span></div>
</section>

<section class="view">
<svg class="scene" viewBox="539 105 1023 861" preserveAspectRatio="xMinYMin slice">
<path d="M853 232L1564 430V616L1370 834Q1364 838 1358 835L530 604V590z" fill="#db9265"/>
<path d="M772 673L530 606V540L1358 773V835z" fill="#e69a68"/>
<path d="M998 673L860 634 900 634 1037 673 1364 762 1358 773z" fill="#ffc98a"/>
<path d="M1370 771L1564 559V616L1370 834z" fill="#b87b55"/>
<path d="M1364 762L1564 541V559L1370 771z" fill="#cf8b61"/>
<path d="M1358 773h12v61q-6 4-12 1z" fill="#ec9d6d"/>
<path d="M1364 762l-6 11h12z" fill="#ffd7a2"/>
<g fill="none" stroke="#160c08" stroke-width="1"><path d="M740 355L851 234Q853 231 858 233L1564 430M744 355L857 234M772 673L1358 835Q1364 838 1370 834L1564 616M998 673L1358 773M1037 673L1364 762 1564 541M1370 771L1564 559M1364 762L1358 773V835M1364 762L1370 771V834"/><path d="M772 673L1358 835" stroke-width="2"/></g>
<use href="#slotA" x="894" y="338"/>
<use href="#holes" x="1215" y="427"/><use href="#holes" x="1375" y="472"/><use href="#holes" x="1277" y="582"/><use href="#holes" x="1117" y="536"/>
<path d="M1435 469l-4 23M1362 551l4 12M1337 579l-5 23M1264 661l4 12" stroke="#5b3bb5"/>
<g fill="none" stroke="#6d7b88"><path d="M596 904v-13h-2l3-15 3 15h-2v13M598 905l9-11-3-4 11-11-5 14-3-2M600 908l16 4v-4l15 8-16 1v-4"/><circle cx="597" cy="907" r="2.500"/><path d="M594 854h7l-7 11h7M616 871l4 5 4-5M620 876v6M639 910l9 11M648 910l-9 11"/></g>
</svg>
<p class="mark">三维网<span>www.3dportal.cn</span></p>
</section>

<section class="dlg">
<div class="dt"><h2>预设定编辑器</h2><button aria-label="关闭"><svg width="12" height="9" viewBox="0 0 12 9"><path d="M2 1l8 7M10 1L2 8" stroke="#553131" stroke-width="4"/><path d="M2 1l8 7M10 1L2 8" stroke="#fff" stroke-width="2.400"/></svg></button></div>
<div class="db">
<div class="treebox">
<ul>
<li class="root"><i class="bx mi"></i><svg><use href="#folder"/></svg><span>常规</span></li>
<li><svg><use href="#folder"/></svg><span><small>NC</small>常规</span></li>
<li><svg><use href="#folder"/></svg><span><small>CMM_XYZ</small>标签</span></li>
<li><svg><use href="#folder"/></svg><span>测量精度</span></li>
<li><svg><use href="#folder"/></svg><span>显示</span></li>
<li class="par"><i class="bx"></i><svg><use href="#folder"/></svg><span>更新模式</span></li>
<li><svg><use href="#folder"/></svg><span>数据转换</span></li>
<li><svg><use href="#folder"/></svg><span>自动激活</span></li>
<li class="par"><i class="bx"></i><svg><use href="#folder"/></svg><span><small>ECO</small>管理器</span></li>
<li><svg><use href="#folder"/></svg><span>备份</span></li>
<li><svg><use href="#folder"/></svg><span class="sel">按键类型</span></li>
<li><svg><use href="#folder"/></svg><span>保存时重算工件尺寸</span></li>
<li><svg><use href="#folder"/></svg><span>材料清单</span></li>
<li><svg><use href="#folder"/></svg><span>增量</span></li>
</ul>
<div class="ts"><b><i class="tri up"></i></b><div class="tt"></div><b class="dn"><i class="tri"></i></b></div>
</div>
<fieldset>
<legend>按键类型</legend>
<div class="opts"><span class="lab">按钮风格:</span>
<div class="rads">
<label><input type="radio" name="style" checked>OS compatible (默认)</label>
<label><input type="radio" name="style">Windows XP</label>
<label><input type="radio" name="style">Windows Classic</label>
<label><input type="radio" name="style">Office 2003</label>
</div></div>
</fieldset>
</div>
<div class="df">
<span class="combo sys"><select disabled aria-label="级别"><option>系统</option></select><b><i class="tri dim"></i></b></span>
<div class="acts"><button aria-label="重置"><svg><use href="#list"/></svg></button><button aria-label="应用"><svg><use href="#tickgo"/></svg></button><button aria-label="确定"><svg><use href="#tick"/></svg></button><button aria-label="退出"><svg><use href="#exit"/></svg></button></div>
</div>
</section>
<svg class="note" viewBox="938 390 320 200" aria-hidden="true"><ellipse cx="1023" cy="425" rx="84" ry="30" fill="none" stroke="#cb1717" stroke-width="3"/><path d="M1249 576L1120 443" stroke="#e01212" fill="none"/><path d="M1116 439l10 5-5 5z" fill="#e01212"/></svg>
</main>
</body>
</html>
```
FILE: styles.css
```css
* { box-sizing: border-box; }
body {
  margin: 0;
  height: 100vh;
  overflow: hidden;
  display: flex;
  flex-direction: column;
  background: #efefef;
  color: #000;
  font: 12px/16px "Noto Sans", "Noto Sans CJK SC", sans-serif;
}
button, select, input { font: inherit; color: inherit; margin: 0; }
button { border: 0; background: none; padding: 0; }
h1, h2, p, ul { margin: 0; padding: 0; font: inherit; }
i { display: block; }
.defs { position: absolute; width: 0; height: 0; }

.titlebar {
  height: 22px;
  flex: none;
  display: flex;
  align-items: center;
  gap: 8px;
  padding-left: 2px;
  border-top: 1px solid #4d5866;
  background: linear-gradient(#94abc3, #c9dbeb);
  color: #4c555e;
}
.menu {
  height: 28px;
  flex: none;
  display: flex;
  align-items: center;
  gap: 16px;
  padding-left: 3px;
  border-bottom: 1px solid #a0a0a0;
}
.menu .grip { margin-right: -6px; }
.grip {
  width: 3px;
  height: 20px;
  flex: none;
  border-right: 1px solid #999;
  border-left: 1px solid #fff;
}
.bar {
  height: 27px;
  flex: none;
  display: flex;
}
.grp {
  display: flex;
  align-items: center;
  padding: 0 2px;
  border-right: 1px solid #8f8f8f;
  border-bottom: 1px solid #8f8f8f;
}
.grp.first { padding-left: 3px; }
.grp .grip { margin-right: 2px; }
.grp button {
  width: 22px;
  height: 22px;
  display: grid;
  place-items: center;
}
.grp svg, .side svg, .dlg li svg, .acts svg {
  width: 16px;
  height: 16px;
  flex: none;
}
.grp button.on {
  background: #f9f9f9;
  border: 1px solid;
  border-color: #888 #fff #fff #888;
}
.sep {
  width: 2px;
  height: 24px;
  margin: 0 2px;
  border-left: 1px solid #999;
  border-right: 1px solid #fff;
}
.tri, .dd::before {
  content: "";
  display: block;
  width: 0;
  height: 0;
  border: 3px solid transparent;
  border-top: 3px solid #000;
  border-bottom: 0;
}
.dd { width: 11px; display: grid; place-items: center; }
.tri.dim, .dd.dim::before { border-top-color: #888; }
.tri.up { border-top: 0; border-bottom: 3px solid #000; }
.combo {
  display: grid;
  align-items: center;
  width: 107px;
  margin: 0 1px 0 2px;
}
.combo > * { grid-area: 1 / 1; }
.combo > .tri { justify-self: end; margin-right: 5px; pointer-events: none; }
.combo select {
  appearance: none;
  width: 100%;
  height: 20px;
  padding: 0 1px;
  border: 0;
  background: #fff;
  line-height: 18px;
}

.desk { position: relative; flex: 1; min-height: 0; display: flex; background: #fff; }
.side {
  width: 69px;
  flex: none;
  display: flex;
  flex-direction: column;
  background: linear-gradient(#a0a0a0, #a0a0a0) 3px 4px / 62px 1px no-repeat, linear-gradient(#999, #999) 68px 0 / 1px 635px no-repeat, linear-gradient(#999, #999) 0 634px / 69px 1px no-repeat, #efefef;
  padding-top: 13px;
}
.side button {
  height: 39px;
  display: flex;
  flex-direction: column;
  align-items: center;
  line-height: 14px;
}
.side button:disabled { color: #808080; }

.panel {
  width: 464px;
  flex: none;
  display: flex;
  flex-direction: column;
  background: #efefef;
}
.ptitle {
  height: 21px;
  flex: none;
  margin-top: 1px;
  padding: 0 5px 0 4px;
  display: flex;
  align-items: center;
  gap: 5px;
  background: #9ab3ce;
}
.ptitle h2 { flex: 1; }
.ptitle button { width: 10px; height: 10px; display: grid; margin-bottom: 1px; }
.list {
  height: 213px;
  flex: none;
  margin: 5px 3px 1px 3px;
  background: #fff;
  border: 2px solid;
  border-color: #666 #888 #ddd #666;
}
table { border-collapse: collapse; table-layout: fixed; }
.prog { width: 438px; }
.c60 { width: 60px; } .c80 { width: 80px; } .c13 { width: 13px; } .c46 { width: 46px; }
.c16 { width: 16px; } .c32 { width: 32px; } .c71 { width: 71px; }
.prog th {
  height: 14px;
  padding: 0;
  border-left: 1px solid #7ce4ff;
  background: linear-gradient(#176fe6, #0349cf);
  color: #aef6ff;
  font-weight: 400;
  line-height: 14px;
  white-space: nowrap;
}
.prog th.cc { font-family: "Liberation Mono", monospace; }
.prog td {
  height: 16px;
  padding: 0 0 0 2px;
  line-height: 14px;
  vertical-align: top;
  white-space: nowrap;
  font-family: "Liberation Sans", "Noto Sans CJK SC", sans-serif;
  background: linear-gradient(#fc0 14px, #c52c08 14px);
}
.prog .st {
  display: flex;
  justify-content: space-between;
  padding: 0 7px 0 18px;
  background: linear-gradient(to top right, #e01010 50%, transparent 50%) 43px 10px / 9px 6px no-repeat, linear-gradient(90deg, #fff 43px, transparent 43px), linear-gradient(#fc0 14px, #c52c08 14px);
}
.prog .name, .prog .mdl { font-size: 11px; }
.prog .name { padding-left: 1px; }
.prog .mdl {
  color: #968722;
  background: linear-gradient(to bottom right, transparent 50%, #e01010 50%) right bottom / 8px 5px no-repeat, linear-gradient(#fc0 14px, #c52c08 14px);
}
.prog .blb { display: block; margin-left: -1px; }
.split {
  height: 9px;
  flex: none;
  margin-top: 1px;
  border-top: 1px solid #888;
  border-bottom: 1px solid #000;
  background: #f4f4f4;
}
.pick {
  height: 94px;
  flex: none;
  margin: 2px 2px 0 4px;
  padding: 6px 0 0 5px;
  display: flex;
  border-right: 2px solid #333;
  background: linear-gradient(#999, #999) 2px 60px / 324px 1px no-repeat;
  color: #999;
}
.pf { width: 122px; }
.pf.wide { width: 162px; }
.pf button {
  width: 100%;
  height: 28px;
  margin-top: 2px;
  padding-right: 6px;
  display: flex;
  align-items: center;
  color: #777;
}
.pf .tri { margin-left: auto; }

.params {
  flex: 1;
  min-height: 0;
  display: flex;
  margin: 0 3px 0 3px;
  border-left: 2px solid #666;
  border-right: 1px solid #888;
  border-top: 3px solid #666;
  border-bottom: 1px solid #ddd;
}
.ptable { flex: 1; }
.tab {
  width: 100%;
  border-bottom: 1px solid #777;
  color: #999;
  font-size: 16px;
  font-weight: 300;
}
.tab th {
  height: 16px;
  padding: 0;
  background: linear-gradient(#a8a8a8, #888);
  color: #ddd;
  font-size: 15px;
  font-weight: 300;
  line-height: 14px;
}
.tab th.val { width: 90px; border-left: 1px solid #777; }
.tab td {
  height: 19px;
  padding: 0 0 0 3px;
  background: #d8d8d8;
  border-bottom: 1px solid #b0b0b0;
  line-height: 16px;
}
.tab td + td { border-left: 1px solid #b0b0b0; }
.tab td.nb { padding: 0; }
.tab small { font: 13px/16px "Liberation Mono", monospace; }
.r { display: flex; align-items: center; height: 18px; line-height: 16px; }
.r > svg { width: 13px; height: 14px; margin-right: 2px; }
.r .bx { margin-right: 5px; }
.l0 { padding-left: 15px; }
.l1 { padding-left: 24px; }
.r.wide .bx { margin-right: 9px; }
.bx {
  width: 11px;
  height: 11px;
  flex: none;
  border: 1px solid #999;
  background: linear-gradient(currentColor, currentColor) center / 5px 1px no-repeat, linear-gradient(currentColor, currentColor) center / 1px 5px no-repeat;
}
.bx.mi { background: linear-gradient(currentColor, currentColor) center / 5px 1px no-repeat; }
.tab input {
  appearance: none;
  display: block;
  width: 13px;
  height: 13px;
  border: 2px solid;
  border-color: #666 #fff #fff #666;
  background: #eee;
}
.d6 {
  display: block;
  width: 80px;
  height: 18px;
  background: #efefef;
  border: 2px solid;
  border-color: #fff #777 #777 #fff;
  color: #999;
  font: 14px/14px "Liberation Sans", sans-serif;
}
.vs {
  width: 18px;
  flex: none;
  display: flex;
  flex-direction: column;
  align-items: center;
  justify-content: space-between;
  padding: 7px 0 8px;
  background: #f3f3f3;
}
.thumb {
  flex: 1;
  width: 14px;
  margin: 6px 0 10px;
  display: grid;
  place-items: center;
  border: 1px solid #999;
  border-radius: 2px;
  background: linear-gradient(90deg, #fafafa, #ddd 40%, #bbb);
}
.thumb i { width: 7px; height: 8px; background: repeating-linear-gradient(#444 0 1px, #ddd 1px 3px); }
.tabs {
  height: 24px;
  flex: none;
  display: flex;
  align-items: flex-start;
  margin-top: 3px;
  border-top: 1px solid #000;
  background: #fff;
}
.tabs button { height: 20px; }
.off { padding: 0 6px 0 10px; color: #777; }
.tabs .act {
  padding: 0 5px 0 6px;
  background: #efefef;
  border: solid #000;
  border-width: 0 1px 1px 0;
}
.foot { height: 6px; flex: none; display: flex; padding-left: 2px; overflow: hidden; background: #fff; }
.foot span {
  height: 20px;
  padding: 1px 6px;
  width: 60px;
  line-height: 16px;
  white-space: nowrap;
  color: #555;
  background: #efefef;
  border: 1px solid #999;
}
.foot .f2 { width: 87px; border-left: 0; }

.view {
  position: relative;
  flex: 1;
  margin: 0 0 8px 5px;
  border: solid #4c6676;
  border-width: 1px 0 0 1px;
  border-bottom: 1px solid #ddd;
  background: linear-gradient(#007cc8, #fff);
  box-shadow: -5px 0 #efefef;
}
.scene { position: absolute; inset: 0; width: 100%; height: 100%; }
.mark {
  position: absolute;
  right: 19px;
  bottom: -6px;
  display: flex;
  color: #fff;
  -webkit-text-stroke: 1px #e01c1c;
  font: 700 18px/20px "Noto Sans CJK SC", sans-serif;
}
.mark span { font: 400 17px/20px "DejaVu Sans", sans-serif; }

.dlg {
  position: absolute;
  left: 531px;
  top: 234px;
  width: 640px;
  height: 335px;
  display: flex;
  flex-direction: column;
  border: 1px solid #000;
  border-radius: 6px 6px 0 0;
  background: #efefef;
  box-shadow: inset -1px -1px #6fd4e6, inset 1px 0 #dff;
}
.dt {
  height: 24px;
  display: flex;
  align-items: center;
  padding: 0 3px 0 5px;
  border-radius: 5px 5px 0 0;
  border-top: 1px solid #e5f2ff;
  background: linear-gradient(#98b2cf, #bad1ea);
}
.dt h2 { flex: 1; }
.dt button {
  width: 31px;
  height: 17px;
  display: grid;
  place-items: center;
  border: 1px solid #5a2020;
  border-radius: 3px;
  background: linear-gradient(#dfa29a, #cb6558 48%, #b33427 52%, #cf7166);
}
.db { display: flex; gap: 20px; padding: 11px 22px 0 13px; }
.treebox {
  width: 273px;
  height: 247px;
  display: flex;
  overflow: hidden;
  background: #fff;
  border: 2px solid;
  border-color: #777 #f8f8f8 #f8f8f8 #777;
}
.treebox ul { flex: 1; list-style: none; }
.treebox li {
  height: 18px;
  display: flex;
  align-items: center;
  padding-left: 52px;
}
.treebox li.root { padding-left: 4px; }
.treebox li.par { padding-left: 30px; }
.treebox .bx { margin-right: 11px; }
.treebox span { margin-left: 3px; padding: 0 3px; line-height: 17px; white-space: nowrap; }
.treebox small { font: 10px "Liberation Mono", monospace; }
.treebox .sel { background: #3f92e2; color: #fff; }
.ts { width: 16px; display: flex; flex-direction: column; background: #f6f6f6; }
.ts b, .sys b {
  height: 16px;
  display: grid;
  place-items: center;
  background: #efefef;
  border: 1px solid;
  border-color: #fff #777 #777 #fff;
}
.ts .tri { border-width: 4px; }
.ts .tri.up { border-top: 0; }
.ts b.dn .tri { border-bottom: 0; }
.tt { height: 102px; margin-bottom: auto; background: #efefef; border: 1px solid; border-color: #fff #777 #777 #ddd; }
fieldset {
  flex: 1;
  height: 247px;
  margin: 0;
  padding: 0;
  min-width: 0;
  border: 1px solid #a0a0a0;
}
legend { margin-left: 5px; padding: 0 3px; line-height: 14px; }
.opts { display: flex; padding: 39px 0 0 24px; }
.lab { width: 98px; }
.rads { font: 11px/16px "Liberation Sans", "Noto Sans CJK SC", sans-serif; }
.rads label { display: flex; align-items: center; height: 16px; margin-bottom: 7px; white-space: nowrap; }
.rads input {
  appearance: none;
  width: 12px;
  height: 12px;
  margin-right: 6px;
  border: 1px solid;
  border-color: #666 #fff #fff #666;
  border-radius: 50%;
  background: #fff;
}
.rads input:checked { background: radial-gradient(#000 2px, #fff 3px); }
.df { display: flex; justify-content: space-between; padding: 9px 22px 0 205px; }
.sys { width: 106px; height: 20px; margin: 0; border: 2px solid; border-color: #777 #fff #fff #777; }
.sys select { background: #efefef; color: #888; height: 16px; line-height: 14px; opacity: 1; }
.sys b { width: 15px; justify-self: end; }
.acts { display: flex; gap: 3px; }
.acts button {
  width: 27px;
  height: 28px;
  display: grid;
  place-items: center;
  border: 1px solid;
  border-color: #fff #999 #999 #fff;
  background: #f2f2f2;
}
.note {
  position: absolute;
  left: 938px;
  top: 286px;
  width: 320px;
  height: 200px;
  pointer-events: none;
}
```
